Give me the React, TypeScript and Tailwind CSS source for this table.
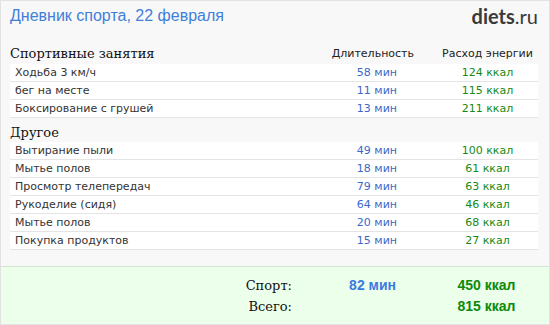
import React from "react";

const sport = [
  { name: "Ходьба 3 км/ч", min: 58, kcal: 124 },
  { name: "бег на месте", min: 11, kcal: 115 },
  { name: "Боксирование с грушей", min: 13, kcal: 211 },
];
const other = [
  { name: "Вытирание пыли", min: 49, kcal: 100 },
  { name: "Мытье полов", min: 18, kcal: 61 },
  { name: "Просмотр телепередач", min: 79, kcal: 63 },
  { name: "Рукоделие (сидя)", min: 64, kcal: 46 },
  { name: "Мытье полов", min: 20, kcal: 68 },
  { name: "Покупка продуктов", min: 15, kcal: 27 },
];

const sans = "font-['DejaVu_Sans',sans-serif]";
const serif = "font-['DejaVu_Serif',serif]";

function Row({ name, min, kcal }: { name: string; min: number; kcal: number }) {
  return (
    <div className={`grid grid-cols-[1fr_120px_101px] h-[18px] bg-white border-b border-[#e4e4e4] text-[11px] leading-[17px] ${sans}`}>
      <div className="pl-[5px] text-[#333]">{name}</div>
      <div className="text-right pr-[40px] text-[#3b68c8]">{min} мин</div>
      <div className="text-center text-[#168a16]">{kcal} ккал</div>
    </div>
  );
}

export default function App() {
  return (
    <div className="w-[550px] h-[325px] border border-[#e2e2e2] bg-[#f8f8f8] flex flex-col">
      <div className="flex justify-between items-start pl-[9px] pr-[11px] h-[39px]">
        <div className="mt-[6px] text-[16px] leading-[18px] text-[#3f7fd9] font-['Liberation_Sans',sans-serif]">
          Дневник спорта, 22 февраля
        </div>
        <div className="mt-[3px] text-[20px] leading-[24px] text-[#3a3a3a] font-['Lato',sans-serif]">
          <span className="font-bold">diets</span>
          <span>.ru</span>
        </div>
      </div>
      <div className="pl-[9px] pr-[11px]">
        <div className="grid grid-cols-[1fr_120px_101px] h-[24px] items-end pb-[2px]">
          <div className={`${serif} text-[13px] leading-[17px] text-[#111]`}>Спортивные занятия</div>
          <div className={`${sans} text-[11px] leading-[17px] text-[#222] text-right pr-[23px]`}>Длительность</div>
          <div className={`${sans} text-[11px] leading-[17px] text-[#222] text-center`}>Расход энергии</div>
        </div>
        {sport.map((r, i) => (
          <Row key={i} {...r} />
        ))}
        <div className="h-[24px] flex items-end pb-[1px]">
          <div className={`${serif} text-[13px] leading-[17px] text-[#111]`}>Другое</div>
        </div>
        {other.map((r, i) => (
          <Row key={i} {...r} />
        ))}
      </div>
      <div className="flex-1" />
      <div className="h-[58px] border-t border-[#cfe6cf] bg-[#ebffeb] pl-[9px] pr-[11px] pt-[8px]">
        <div className="grid grid-cols-[282px_24px_120px_101px] h-[21px] items-center">
          <div className={`${serif} text-[13px] text-right text-[#111]`}>Спорт:</div>
          <div />
          <div className="text-right pr-[40px] text-[14px] font-bold text-[#3b7be0] font-['Liberation_Sans',sans-serif]">82 мин</div>
          <div className="text-center text-[14px] font-bold text-[#0c8a0c] font-['Liberation_Sans',sans-serif]">450 ккал</div>
        </div>
        <div className="grid grid-cols-[282px_24px_120px_101px] h-[21px] items-center">
          <div className={`${serif} text-[13px] text-right text-[#111]`}>Всего:</div>
          <div />
          <div />
          <div className="text-center text-[14px] font-bold text-[#0c8a0c] font-['Liberation_Sans',sans-serif]">815 ккал</div>
        </div>
      </div>
    </div>
  );
}
